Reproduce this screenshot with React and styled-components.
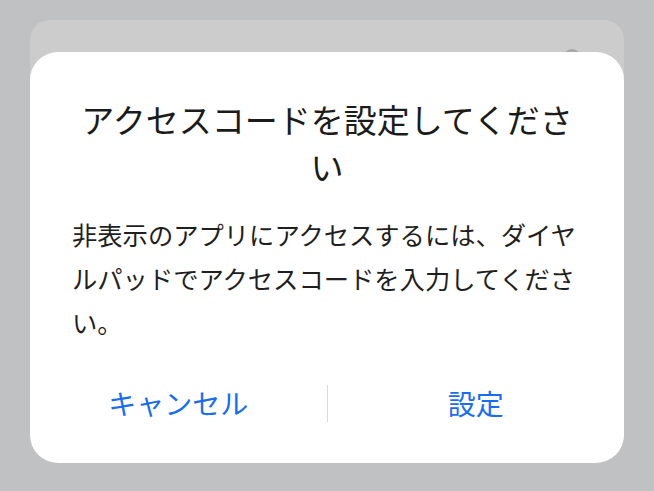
import React from "react";
import styled, { createGlobalStyle } from "styled-components";

const Global = createGlobalStyle`
  html, body { margin: 0; padding: 0; }
  body {
    background: #c0c1c3;
    font-family: "Noto Sans CJK JP", "Noto Sans", sans-serif;
    -webkit-font-smoothing: antialiased;
  }
`;

const Screen = styled.div`
  width: 654px;
  height: 491px;
  box-sizing: border-box;
  padding: 20px 30px 0;
  background: #c0c1c3;
`;

const BackCard = styled.div`
  position: relative;
  padding-top: 32px;
  border-radius: 20px 20px 0 0;
  background: linear-gradient(#cccccc 0 60px, transparent 60px);
`;

const Knob = styled.div`
  position: absolute;
  left: 533px;
  top: 29px;
  width: 18px;
  height: 18px;
  border-radius: 50%;
  background: #a9a9a9;
`;

const Dialog = styled.div`
  position: relative;
  height: 411px;
  box-sizing: border-box;
  background: #ffffff;
  border-radius: 28px;
  padding: 44px 42px 0;
  display: flex;
  flex-direction: column;
`;

const Title = styled.h1`
  margin: 0;
  font-size: 33px;
  line-height: 47px;
  font-weight: 400;
  color: #1b1b1b;
  text-align: center;
`;

const Body = styled.p`
  margin: 22px 0 0;
  font-size: 25.3px;
  line-height: 44px;
  color: #1f1f1f;
  text-align: left;
`;

const Actions = styled.div`
  margin: 29px -42px 0;
  display: flex;
  align-items: center;
  height: 60px;
`;

const Action = styled.button`
  flex: 1;
  border: 0;
  background: transparent;
  font-family: inherit;
  font-size: 28px;
  line-height: 40px;
  color: #1a6ded;
  padding: 0;
  cursor: pointer;
`;

const Divider = styled.div`
  width: 1px;
  height: 37px;
  background: #dadada;
`;

export default function App() {
  return (
    <>
      <Global />
      <Screen>
        <BackCard>
          <Knob />
          <Dialog>
            <Title>アクセスコードを設定してください</Title>
            <Body>
              非表示のアプリにアクセスするには、ダイヤルパッドでアクセスコードを入力してください。
            </Body>
            <Actions>
              <Action>キャンセル</Action>
              <Divider />
              <Action>設定</Action>
            </Actions>
          </Dialog>
        </BackCard>
      </Screen>
    </>
  );
}
